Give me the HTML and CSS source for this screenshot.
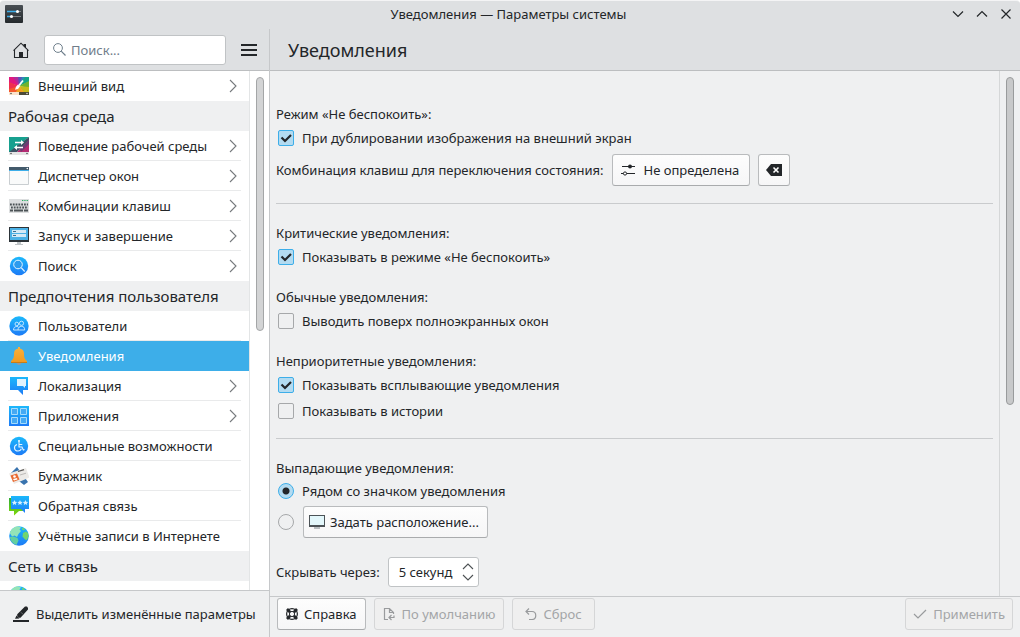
FILE: index.html
```html
<!DOCTYPE html>
<html lang="ru">
<head>
<meta charset="utf-8">
<title>Уведомления — Параметры системы</title>
<link rel="stylesheet" href="styles.css">
</head>
<body>
<svg class="defs" aria-hidden="true">
  <defs>
    <linearGradient id="blue" x1="0" y1="0" x2="0" y2="1"><stop offset="0" stop-color="#1cb8fb"/><stop offset="1" stop-color="#1d7bf6"/></linearGradient>
    <linearGradient id="gold" x1="0" y1="0" x2="0" y2="1"><stop offset="0" stop-color="#f9b13c"/><stop offset="1" stop-color="#f19a1e"/></linearGradient>
    <linearGradient id="green" x1="0" y1="0" x2="0" y2="1"><stop offset="0" stop-color="#2fae35"/><stop offset="1" stop-color="#7fd80d"/></linearGradient>
    <linearGradient id="dark" x1="0" y1="0" x2="0" y2="1"><stop offset="0" stop-color="#4a5055"/><stop offset="1" stop-color="#24292c"/></linearGradient>
    <symbol id="chevron" viewBox="0 0 8 14"><path d="M1 1l6 6-6 6" fill="none" stroke="#777b7e" stroke-width="1.1"/></symbol>
    <symbol id="globe" viewBox="0 0 20 20">
      <circle cx="10" cy="10" r="9.800" fill="url(#blue)"/>
      <path d="M.8 7C2 3 5.400.6 9 .3l3 1.200-1.500 2L12 5 9.500 8 8 11 5.500 9.500 3 10.500z" fill="#93e4b8"/>
      <path d="M1 11l3.500-.5L8.500 12l1 2.500L7.500 19C4 18 1.300 15 1 11z" fill="#62cfa0"/>
      <path d="M14 7l3-1.500 2 1.500.7 3-1.700 4-2-.5-2.500-3z" fill="#72d56e"/>
      <path d="M13 1.500l3 1.500-1 1.500-2-1z" fill="#72d56e"/>
    </symbol>
  </defs>
</svg>
<div class="window">
  <header class="titlebar">
    <svg class="app-icon" viewBox="0 0 18 18"><rect width="18" height="18" rx="1" fill="url(#dark)"/><path d="M2 6.500h11" stroke="#3daee9" stroke-width="1.300"/><path d="M13 6.500h3M7 11.500h9" stroke="#7b8185"/><path d="M2 11.500h5" stroke="#3daee9" stroke-width="1.300"/><circle cx="12.500" cy="6.500" r="1.500" fill="#fff"/><circle cx="6.500" cy="11.500" r="1.500" fill="#fff"/></svg>
    <div class="window-title">Уведомления — Параметры системы</div>
    <div class="window-buttons">
      <button type="button" aria-label="Свернуть"><svg viewBox="0 0 12 12"><path d="M1 3.500l5 5 5-5"/></svg></button>
      <button type="button" aria-label="Развернуть"><svg viewBox="0 0 12 12"><path d="M1 8.500l5-5 5 5"/></svg></button>
      <button type="button" aria-label="Закрыть"><svg viewBox="0 0 12 12"><path d="M1.500 1.500l9 9M10.500 1.500l-9 9"/></svg></button>
    </div>
  </header>

  <div class="body">
    <aside class="sidebar">
      <div class="toolbar">
        <button class="tool" type="button" aria-label="Главная"><svg width="16" height="16" viewBox="0 0 16 16"><path d="M1.500 8v7.500h13V8M.5 8.700L8 1.200l7.500 7.500" fill="none" stroke="#232629" stroke-width="1.100"/><path d="M10.500 2h2.500v4.500L10.500 4zM6 10h4v6H6z" fill="#232629"/></svg></button>
        <label class="search">
          <svg width="13" height="13" viewBox="0 0 13 13"><circle cx="5" cy="5" r="4.400" fill="none" stroke="#6f7f8c"/><path d="M8.200 8.200l4.300 4.300" stroke="#6f7f8c" stroke-width="1.200"/></svg>
          <input type="text" placeholder="Поиск..." aria-label="Поиск">
        </label>
        <button class="tool" type="button" aria-label="Меню"><svg width="16" height="12" viewBox="0 0 16 12"><path d="M0 1h16M0 6h16M0 11h16" stroke="#232629" stroke-width="2"/></svg></button>
      </div>
      <div class="sidebar-scroll">
        <nav class="list">
          <a class="item last" href="#"><svg class="icon" viewBox="0 0 20 20"><path fill="#e0187f" d="M0 1h6l4 9-10-3z"/><path fill="#f0304e" d="M0 6l10 4-10 6z"/><path fill="#b02b9a" d="M4 1h6v9z"/><path fill="#5a53b8" d="M9 1h5l-4 9z"/><path fill="#2f88b8" d="M13 1h4l-7 9z"/><path fill="#13a488" d="M16 1h4v5l-10 4z"/><path fill="#6fb32e" d="M20 5v7l-10-2z"/><path fill="#c5bb1a" d="M20 11v5h-6l-4-6z"/><path fill="#f3a022" d="M15 16H6l4-6z"/><path fill="#f4582e" d="M0 13l10-3-3 6H0z"/><path fill="#fbe3cb" d="M0 16h10v3H0z"/><path fill="#4b4a38" d="M10 16h10v3H10z"/><path d="M14 4.500L10 9.500" stroke="#fff" stroke-width="1.800"/><path d="M9 8.500l2 1.700L9 13l-3 .8 1-3z" fill="#fff"/><circle cx="2" cy="17.500" r=".7" fill="#333"/><circle cx="18" cy="17.500" r=".7" fill="#fff"/></svg><span>Внешний вид</span><svg class="chev"><use href="#chevron"/></svg></a>
          <h2>Рабочая среда</h2>
          <a class="item" href="#"><svg class="icon" viewBox="0 0 20 20"><path fill="#17a08f" d="M0 1h20L0 17z"/><path fill="#3c5264" d="M0 16L20 1v4L8 16z"/><path fill="#b42b72" d="M20 4v12H8z"/><path fill="#6c3d73" d="M11 13l9-9v4l-8 8z"/><path fill="#e4e4e4" d="M0 16h20v3H0z"/><path d="M6 6.500h7M7 11.500h7" stroke="#fff" stroke-width="1.300"/><path fill="#fff" d="M12 4l3 2.500L12 9zM8 9l-3 2.500L8 14z"/><circle cx="2" cy="17.500" r=".7" fill="#333"/><circle cx="18" cy="17.500" r=".7" fill="#333"/></svg><span>Поведение рабочей среды</span><svg class="chev"><use href="#chevron"/></svg></a>
          <a class="item" href="#"><svg class="icon" viewBox="0 0 20 20"><path fill="#f9fafa" stroke="#c9ced1" d="M.5 2.500h19v16H.5z"/><path fill="#435a6b" d="M0 1h20v3H0z"/><path fill="#3daee9" d="M0 4h20v1H0z"/><circle cx="18.300" cy="2.500" r=".8" fill="#fff"/></svg><span>Диспетчер окон</span><svg class="chev"><use href="#chevron"/></svg></a>
          <a class="item" href="#"><svg class="icon" viewBox="0 0 20 20"><path fill="#dcdedf" d="M0 3h20v14H0z"/><path d="M1 8.500h18M2 11.500h17" stroke="#4b5255" stroke-width="1.800" stroke-dasharray="1.800 1"/><path d="M1 14.500h3M5 14.500h9M15 14.500h4" stroke="#4b5255" stroke-width="1.800"/><path d="M13 4.500h6" stroke="#27ae60" stroke-dasharray="1.300 1"/></svg><span>Комбинации клавиш</span><svg class="chev"><use href="#chevron"/></svg></a>
          <a class="item" href="#"><svg class="icon" viewBox="0 0 20 20"><path fill="#2c3338" d="M0 1h20v15H0z"/><path fill="#4bb1e6" d="M1 2h18v12H1z"/><path d="M3 4h14v3H3zM3 8h14v3H3z" fill="#d5eaf6"/><path d="M4 5.500h3M4 9.500h3" stroke="#386f91"/><path d="M8 16h4v2h2v1H6v-1h2z" fill="#bfc4c7"/></svg><span>Запуск и завершение</span><svg class="chev"><use href="#chevron"/></svg></a>
          <a class="item last" href="#"><svg class="icon" viewBox="0 0 20 20"><circle cx="10" cy="10" r="9.200" fill="url(#blue)"/><circle cx="9" cy="8.500" r="4.300" fill="#2c9bee" stroke="#e4f5ff"/><path d="M12.200 11.700l3.500 3.800" stroke="#e4f5ff" stroke-width="1.200"/></svg><span>Поиск</span><svg class="chev"><use href="#chevron"/></svg></a>
          <h2>Предпочтения пользователя</h2>
          <a class="item" href="#"><svg class="icon" viewBox="0 0 20 20"><circle cx="10" cy="10" r="9.700" fill="url(#blue)"/><g fill="none" stroke="#d2edff" stroke-width=".9"><circle cx="7.800" cy="8" r="1.800"/><circle cx="12.500" cy="7.300" r="2.100"/><path d="M4.500 14c0-2.500 1.500-3.500 3.300-3.500 1 0 1.700.3 2 1M9 14c0-2.500 1.500-3.700 3.500-3.700S15.700 11.500 15.700 14zM4.500 14H9"/></g></svg><span>Пользователи</span></a>
          <a class="item selected" href="#" aria-current="page"><svg class="icon" viewBox="0 0 20 20"><path fill="#8f9ca5" d="M7 16.500h6l-2 2.500H9z"/><path fill="url(#gold)" d="M9 1h2v1.500c2.800.6 4 2.500 4 5 0 4 .5 5.500 3 7.500v1.500H2V15c2.500-2 3-3.500 3-7.500 0-2.500 1.200-4.400 4-5z"/><path fill="#c97c15" d="M2 16h16v1H2z"/></svg><span>Уведомления</span></a>
          <a class="item" href="#"><svg class="icon" viewBox="0 0 20 20"><path fill="url(#blue)" d="M1 1h18v13h-5v5l-5-5H1z"/><path fill="#e2f3fd" d="M8 3h9v7h-1v2l-2-2H8z"/></svg><span>Локализация</span><svg class="chev"><use href="#chevron"/></svg></a>
          <a class="item" href="#"><svg class="icon" viewBox="0 0 20 20"><path fill="url(#blue)" d="M0 0h20v20H0z"/><path d="M2.500 2.500h6v6h-6zM11.500 2.500h6v6h-6zM2.500 11.500h6v6h-6zM11.500 11.500h6v6h-6z" fill="#45a9f3" stroke="#a7dcfb"/></svg><span>Приложения</span><svg class="chev"><use href="#chevron"/></svg></a>
          <a class="item" href="#"><svg class="icon" viewBox="0 0 20 20"><circle cx="10" cy="10" r="9.200" fill="url(#blue)"/><g fill="none" stroke="#e4f5ff" stroke-width="1.100"><path d="M10 6v5h3l1.300 3 1.200-.5M10.300 8.500h3M8 8.500c-4 1.500-3 6.500 1 6.500 2 0 3-1 3.300-2.300"/></g><circle cx="10" cy="5" r="1" fill="#fff"/></svg><span>Специальные возможности</span></a>
          <a class="item" href="#"><svg class="icon" viewBox="0 0 20 20"><path fill="#3873ae" d="M1 8l7-7 11 15-4 3z"/><path fill="#eceae7" d="M0 7.500L17 2l3.500 9.500L5 18z"/><path fill="#e96a31" d="M1.500 9.500L8 7.500l2.500 6L4 16z"/><circle cx="5.500" cy="10.500" r="1.300" fill="#fff"/><path fill="#fff" d="M4 13l4-1 .5 1.500L5 14.500z"/><path d="M9 5.500l6-1.800" stroke="#5a5856" stroke-width="1.300"/><path d="M11 9l6-1.800" stroke="#bcbab8"/></svg><span>Бумажник</span></a>
          <a class="item" href="#"><svg class="icon" viewBox="0 0 20 20"><path fill="url(#green)" d="M0 2h16v13h-6l-5 4.500V15H0z"/><path fill="url(#blue)" d="M2 0h18v13h-4v4l-4-4H2z"/><g fill="#d9f0ff"><path id="star" d="M5.500 4l.8 1.700 1.900.2-1.400 1.300.4 1.900-1.700-1-1.700 1 .4-1.900-1.400-1.300 1.900-.2z"/><use href="#star" x="5.500"/><use href="#star" x="11"/></g></svg><span>Обратная связь</span></a>
          <a class="item last" href="#"><svg class="icon"><use href="#globe"/></svg><span>Учётные записи в Интернете</span></a>
          <h2>Сеть и связь</h2>
          <a class="item" href="#" aria-label="Сеть"><svg class="icon"><use href="#globe"/></svg></a>
        </nav>
        <div class="track"><div class="thumb thumb-list"></div></div>
      </div>
      <div class="sidebar-footer">
        <button class="highlight" type="button"><svg width="16" height="16" viewBox="0 0 16 16"><path fill="#232629" d="M0 14h16v2H0zM2 12.800l1.500-3.300 3 3zM4.200 8.300L12 .5h2l1 1.500v1.500L7.500 11.700H6L4.200 9.900z"/><path d="M7.500 6l3 2.500" stroke="#73777a" stroke-width=".7"/></svg>Выделить изменённые параметры</button>
      </div>
    </aside>

    <main class="main">
      <div class="page-head"><h1>Уведомления</h1></div>
      <div class="main-scroll">
        <form class="content" id="settings">
          <div class="group">
            <p>Режим «Не беспокоить»:</p>
            <label class="check"><input type="checkbox" checked>При дублировании изображения на внешний экран</label>
            <div class="shortcut">
              <span>Комбинация клавиш для переключения состояния:</span>
              <button class="btn key" type="button"><svg width="14" height="14" viewBox="0 0 14 14"><path d="M1 3.500h13M0 10.500h14" stroke="#232629"/><circle cx="9" cy="3.500" r="2" fill="#232629"/><circle cx="4" cy="10.500" r="1.600" fill="#fcfcfc" stroke="#232629"/></svg>Не определена</button>
              <button class="btn clear" type="button" aria-label="Очистить"><svg width="16" height="12" viewBox="0 0 16 12"><path fill="#232629" d="M0 6l5-6h11v12H5z"/><path d="M7.500 3.500l5 5M12.500 3.500l-5 5" stroke="#fff" stroke-width="1.600"/></svg></button>
            </div>
          </div>
          <hr>
          <div class="groups">
            <div class="group">
              <p>Критические уведомления:</p>
              <label class="check"><input type="checkbox" checked>Показывать в режиме «Не беспокоить»</label>
            </div>
            <div class="group">
              <p>Обычные уведомления:</p>
              <label class="check"><input type="checkbox">Выводить поверх полноэкранных окон</label>
            </div>
            <div class="group">
              <p>Неприоритетные уведомления:</p>
              <label class="check"><input type="checkbox" checked>Показывать всплывающие уведомления</label>
              <label class="check"><input type="checkbox">Показывать в истории</label>
            </div>
          </div>
          <hr>
          <div class="group popups">
            <p>Выпадающие уведомления:</p>
            <label class="check"><input type="radio" name="place" checked>Рядом со значком уведомления</label>
            <div class="custom">
              <input type="radio" name="place" aria-label="Задать расположение">
              <button class="btn place" type="button"><svg width="16" height="14" viewBox="0 0 16 14"><path fill="#4c5357" d="M0 0h16v12H0z"/><path fill="#e3f7fb" d="M1 1h14v9H1z"/><path fill="#b9bec1" d="M5 12h6v2H5z"/></svg>Задать расположение...</button>
            </div>
          </div>
          <div class="hide-row">
            <label for="timeout">Скрывать через:</label>
            <div class="spin">
              <input id="timeout" type="text" value="5 секунд">
              <div class="spin-buttons">
                <button type="button" aria-label="Больше"><svg width="12" height="7" viewBox="0 0 12 7"><path d="M1 6l5-5 5 5"/></svg></button>
                <button type="button" aria-label="Меньше"><svg width="12" height="7" viewBox="0 0 12 7"><path d="M1 1l5 5 5-5"/></svg></button>
              </div>
            </div>
          </div>
        </form>
        <div class="track"><div class="thumb thumb-main"></div></div>
      </div>
      <footer class="actions">
        <button class="btn help" type="button"><svg width="12" height="12" viewBox="0 0 12 12"><circle cx="6" cy="6" r="2.600" fill="none" stroke="#232629"/><circle cx="6" cy="6" r="5.400" fill="none" stroke="#232629" stroke-width="1.200"/><path d="M1 1l3.200 3.200M11 1L7.800 4.200M1 11l3.200-3.200M11 11L7.800 7.800" stroke="#232629" stroke-width="2.800"/></svg>Справка</button>
        <button class="btn defaults" type="button" disabled><svg width="12" height="14" viewBox="0 0 12 14"><path d="M5 12.500H1.500v-11h5l4 4V7M6.500 1.500v4h4M11 8.500v2H6M8.500 8L6 10.500 8.500 13" fill="none" stroke="#999b9d" stroke-width="1.200"/></svg>По умолчанию</button>
        <button class="btn reset" type="button" disabled><svg width="12" height="12" viewBox="0 0 12 12"><path d="M4 .5L1 3.500l3 3M1 3.500h6c5 0 5 8 0 8H4" fill="none" stroke="#999b9d" stroke-width="1.200"/></svg>Сброс</button>
        <button class="btn apply" type="button" disabled><svg width="14" height="10" viewBox="0 0 14 10"><path d="M1 5l4 4 8-8" fill="none" stroke="#999b9d" stroke-width="1.200"/></svg>Применить</button>
      </footer>
    </main>
  </div>
</div>
</body>
</html>
```

FILE: styles.css
```css
* { box-sizing: border-box; }
body {
  margin: 0;
  background: #fff;
  color: #232629;
  font: 13px/18px "Noto Sans", sans-serif;
}
button, input { font: inherit; color: inherit; margin: 0; }
button { padding: 0; border: 0; background: none; }
svg { flex: none; display: block; }
h1, h2, p { margin: 0; font-weight: 400; }
.defs { position: absolute; width: 0; height: 0; }

.window {
  display: flex;
  flex-direction: column;
  height: 100vh;
  overflow: hidden;
  background: #eff0f1;
  border-top: 1px solid #f4f4f5;
  border-radius: 4px 4px 0 0;
}
.titlebar {
  flex: none;
  display: grid;
  grid-template-columns: 1fr auto 1fr;
  align-items: center;
  height: 28px;
  padding: 0 8px 2px 5px;
  background: #dee0e2;
}
.app-icon { width: 18px; height: 18px; }
.window-buttons { display: flex; justify-content: flex-end; gap: 12px; }
.window-buttons svg { width: 12px; height: 12px; fill: none; stroke: #232629; stroke-width: 1.2; }

.body { flex: 1; display: flex; min-height: 0; }
.sidebar {
  flex: none;
  display: flex;
  flex-direction: column;
  width: 270px;
  border-right: 1px solid #c6c8ca;
}
.toolbar {
  flex: none;
  display: flex;
  align-items: center;
  justify-content: space-between;
  height: 42px;
  padding: 0 12px 0 13px;
  background: #dee0e2;
  border-bottom: 1px solid #bcbec0;
}
.search {
  display: flex;
  align-items: center;
  gap: 5px;
  width: 182px;
  height: 30px;
  padding: 0 8px;
  background: #fff;
  border: 1px solid #c0c3c5;
  border-radius: 3px;
}
.search input { flex: 1; min-width: 0; padding: 0; border: 0; outline: 0; background: none; }
.search input::placeholder { color: #707d8a; opacity: 1; }

.sidebar-scroll { flex: 1; display: flex; min-height: 0; background: #fff; }
.list { flex: 1; overflow: hidden; }
.list h2 {
  height: 30px;
  padding-left: 8px;
  background: #eff0f1;
  font-size: 15px;
  line-height: 30px;
}
.item {
  display: flex;
  align-items: center;
  gap: 9px;
  height: 30px;
  padding: 0 12px 0 9px;
  color: inherit;
  text-decoration: none;
  background: linear-gradient(#e9eaeb, #e9eaeb) 8px 100% / calc(100% - 16px) 1px no-repeat;
}
.item.selected { background: #3daee9; color: #fff; }
.item.last { background: none; }
.item span { flex: 1; white-space: nowrap; }
.icon { width: 20px; height: 20px; }
.chev { width: 8px; height: 14px; }
.track { flex: none; width: 20px; padding: 6px; border-left: 1px solid #e3e5e6; }
.thumb { width: 8px; border: 1px solid #a4a6a7; border-radius: 4px; background: #d3d4d5; }
.thumb-list { height: 50%; }
.thumb-main { height: 64%; background: #c8c9ca; border-color: #999b9c; }

.sidebar-footer { flex: none; height: 47px; padding: 0 10px 0 13px; border-top: 1px solid #c6c8ca; }
.highlight { display: flex; align-items: center; gap: 7px; height: 46px; white-space: nowrap; }

.main { flex: 1; display: flex; flex-direction: column; min-width: 0; }
.page-head {
  flex: none;
  height: 42px;
  padding-left: 18px;
  background: #dee0e2;
  border-bottom: 1px solid #bcbec0;
}
h1 { font-size: 18px; line-height: 42px; }
.main-scroll { flex: 1; display: flex; min-height: 0; }
.main-scroll .track { width: 21px; border-color: #d5d7d8; }
.content { flex: 1; padding: 34px 6px 0; overflow: hidden; }
.group { display: flex; flex-direction: column; gap: 2px; }
.group p { padding-bottom: 1px; }
.groups { display: flex; flex-direction: column; gap: 19px; }
.check, .custom { display: flex; align-items: center; align-self: flex-start; height: 24px; padding-left: 2px; gap: 8px; }
.popups p { padding-bottom: 0; }
.custom { height: 34px; gap: 9px; }
hr { height: 1px; margin: 15px 0 20px; border: 0; background: #c9cbcd; }
.shortcut { display: flex; align-items: center; gap: 8px; padding: 2px 0; }

input[type="checkbox"], input[type="radio"] {
  appearance: none;
  flex: none;
  width: 16px;
  height: 16px;
  border: 1px solid #a6a8aa;
  border-radius: 2px;
  background: center / 14px 14px no-repeat;
}
input[type="radio"] { border-radius: 50%; }
input[type="checkbox"]:checked {
  border-color: #3daee9;
  background-color: #b3dbf1;
  background-image: url("data:image/svg+xml,%3Csvg xmlns='http://www.w3.org/2000/svg' viewBox='0 0 14 14'%3E%3Cpath d='M2.500 6.500l3.500 3.500 6-6' fill='none' stroke='%23232629' stroke-width='2.200'/%3E%3C/svg%3E");
}
input[type="radio"]:checked {
  border-color: #3daee9;
  background: radial-gradient(circle, #232629 0 3px, #b3dbf1 4px);
}

.btn {
  display: flex;
  align-items: center;
  justify-content: center;
  gap: 6px;
  height: 32px;
  padding: 0 7px;
  white-space: nowrap;
  background: linear-gradient(#fdfdfd, #f6f6f7);
  border: 1px solid #b9bbbd;
  border-bottom-color: #a9abad;
  border-radius: 3px;
}
.btn:disabled { background: #efefef; border-color: #d5d6d7; color: #a3a5a7; }
.btn.key { gap: 9px; padding: 0 10px 0 8px; }
.btn.clear { width: 32px; }
.btn.place { gap: 5px; padding: 0 8px 0 5px; }
.btn.help { padding: 0 8px; }
.btn.defaults { padding: 0 8px; gap: 7px; }

.hide-row { display: flex; align-items: center; gap: 8px; margin-top: 18px; }
.spin {
  display: flex;
  align-items: center;
  justify-content: space-between;
  width: 91px;
  height: 30px;
  padding: 0 4px 0 10px;
  background: #fff;
  border: 1px solid #c0c3c5;
  border-radius: 3px;
}
.spin input { width: 58px; padding: 0; border: 0; outline: 0; background: none; }
.spin-buttons { display: flex; flex-direction: column; gap: 4px; }
.spin-buttons svg { fill: none; stroke: #4d5154; stroke-width: 1.1; }

.actions {
  flex: none;
  display: flex;
  gap: 8px;
  height: 41px;
  padding: 1px 7px 0;
  border-top: 1px solid #c6c8ca;
}
.reset { padding: 0 12px; }
.apply { margin-left: auto; }
```
